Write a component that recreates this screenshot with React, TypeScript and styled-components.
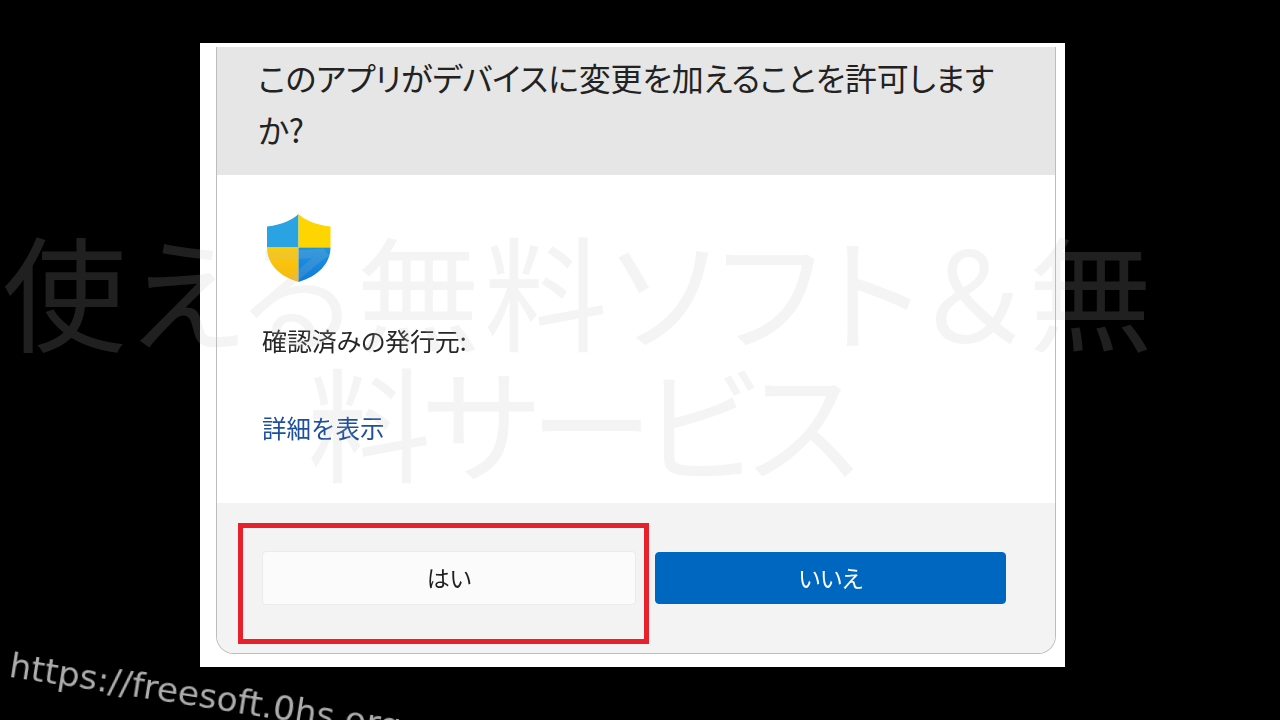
import React from "react";
import styled, { createGlobalStyle } from "styled-components";

const jpFont = `"Noto Sans CJK JP", "Noto Sans", sans-serif`;

const GlobalStyle = createGlobalStyle`
  html, body {
    margin: 0;
    height: 720px;
    overflow: hidden;
    background: #000;
  }
  * {
    box-sizing: border-box;
  }
`;

const Stage = styled.div`
  position: relative;
  width: 1280px;
  height: 720px;
  padding: 43px 0 0 200px;
  overflow: hidden;
  background: #000;
  font-family: ${jpFont};
`;

const Sheet = styled.div`
  width: 865px;
  height: 624px;
  padding: 4px 9px 13px 16px;
  background: #fff;
`;

const Dialog = styled.div`
  display: flex;
  flex-direction: column;
  height: 607px;
  border: 1px solid #bdbdbd;
  border-top: 0;
  border-radius: 0 0 18px 18px;
  overflow: hidden;
  filter: blur(0.35px);
`;

const Header = styled.header`
  height: 128px;
  padding: 4px 40px 0 41px;
  background: #e6e6e6;
  color: #222;
  font-size: 32px;
  font-weight: 400;
  letter-spacing: -0.15px;
  line-height: 52px;
  font-feature-settings: "palt";
`;

const Body = styled.section`
  flex: 1;
  display: flex;
  flex-direction: column;
  align-items: flex-start;
  padding: 39px 0 0 45px;
  background: #fff;
`;

const ShieldIcon = styled.svg`
  width: 64px;
  height: 68px;
  margin: 0 0 0 5px;
`;

const Publisher = styled.div`
  margin-top: 40px;
  color: #262626;
  font-size: 25px;
  font-weight: 400;
  line-height: 36px;
  letter-spacing: -0.1px;
  font-feature-settings: "palt";
`;

const DetailsLink = styled.a`
  margin-top: 52px;
  color: #1d4f9c;
  font-size: 24.500px;
  font-weight: 400;
  line-height: 36px;
`;

const Footer = styled.footer`
  display: flex;
  align-items: flex-start;
  height: 150px;
  padding: 20px 0 0 21px;
  background: #f3f3f3;
`;

const Highlight = styled.div`
  width: 411px;
  height: 121px;
  padding: 23px 0 0 19px;
  border: 5px solid #e6212b;
`;

const Button = styled.button<{ $primary?: boolean }>`
  display: block;
  height: ${(p) => (p.$primary ? 52 : 54)}px;
  width: ${(p) => (p.$primary ? 351 : 374)}px;
  margin: ${(p) => (p.$primary ? "29px 0 0 6px" : "0")};
  padding: 0 0 2px;
  border: 1px solid ${(p) => (p.$primary ? "#0067c0" : "#ebebeb")};
  border-radius: 4px;
  background: ${(p) => (p.$primary ? "#0067c0" : "#fbfbfb")};
  color: ${(p) => (p.$primary ? "#fff" : "#1f1f1f")};
  font-family: ${jpFont};
  font-size: 23px;
  font-weight: 400;
  font-feature-settings: "palt";
`;

const Watermark = styled.div`
  position: absolute;
  top: 223px;
  left: 0;
  width: 1158px;
  color: rgba(188, 188, 188, 0.17);
  font-size: 124px;
  font-weight: 400;
  line-height: 131px;
  text-align: center;
  font-feature-settings: "palt";
  pointer-events: none;
`;

const WatermarkLine = styled.div<{ $tracking: number }>`
  letter-spacing: ${(p) => p.$tracking}px;
  white-space: nowrap;
`;

const SiteUrl = styled.div`
  position: absolute;
  top: 645px;
  left: 13px;
  color: #adadad;
  font-family: "DejaVu Sans", sans-serif;
  font-size: 34.500px;
  white-space: nowrap;
  transform: rotate(9deg);
  transform-origin: left top;
`;

function Shield() {
  return (
    <ShieldIcon viewBox="0 0 64 68">
      <defs>
        <clipPath id="shield-outline">
          <path d="M31.500 0C25 6 16 10.500 0 12.500V33C0 50 12 62 31.500 68C51 62 63.500 50 63.500 33V12.500C47 10.500 38 6 31.500 0Z" />
        </clipPath>
        <linearGradient id="shield-br" x1="0" y1="0" x2="0" y2="1">
          <stop offset="0" stopColor="#1f94e2" />
          <stop offset="1" stopColor="#0f7ad8" />
        </linearGradient>
        <linearGradient id="shield-bl" x1="0" y1="0" x2="0" y2="1">
          <stop offset="0" stopColor="#ffcb05" />
          <stop offset="1" stopColor="#f4b818" />
        </linearGradient>
      </defs>
      <g clipPath="url(#shield-outline)">
        <rect x="0" y="0" width="31.500" height="33.500" fill="#2aa3e2" />
        <rect x="31.500" y="0" width="32.500" height="33.500" fill="#ffd500" />
        <rect x="0" y="33.500" width="31.500" height="35" fill="url(#shield-bl)" />
        <rect x="31.500" y="33.500" width="32.500" height="35" fill="url(#shield-br)" />
      </g>
    </ShieldIcon>
  );
}

export default function App() {
  return (
    <Stage>
      <GlobalStyle />
      <Sheet>
        <Dialog>
          <Header>このアプリがデバイスに変更を加えることを許可します か?</Header>
          <Body>
            <Shield />
            <Publisher>確認済みの発行元:</Publisher>
            <DetailsLink>詳細を表示</DetailsLink>
          </Body>
          <Footer>
            <Highlight>
              <Button>はい</Button>
            </Highlight>
            <Button $primary>いいえ</Button>
          </Footer>
        </Dialog>
      </Sheet>
      <Watermark>
        <WatermarkLine $tracking={3.5}>使える無料ソフト＆無</WatermarkLine>
        <WatermarkLine $tracking={-9}>料サービス</WatermarkLine>
      </Watermark>
      <SiteUrl>https://freesoft.0hs.org</SiteUrl>
    </Stage>
  );
}
